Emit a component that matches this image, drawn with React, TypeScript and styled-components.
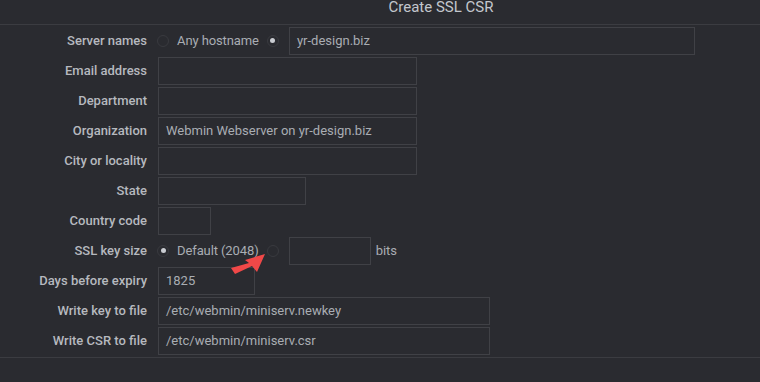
import React from 'react';
import styled, { createGlobalStyle } from 'styled-components';

const GlobalStyle = createGlobalStyle`
    html, body {
        margin: 0;
        padding: 0;
        background: #2a2b30;
    }
    body {
        font-family: Roboto, 'Liberation Sans', sans-serif;
        width: 760px;
        height: 382px;
        overflow: hidden;
    }
`;

const Page = styled.div`
    position: relative;
    width: 760px;
    height: 382px;
    background: #2a2b30;
`;

const Header = styled.div`
    height: 24px;
    border-bottom: 1px solid #3b3c41;
    padding-left: 122px;
    text-align: center;
    color: #c3c7cd;
    font-size: 15px;
    line-height: 15px;
`;

const Form = styled.div`
    display: grid;
    grid-template-columns: 147px 1fr;
    column-gap: 11px;
    row-gap: 2px;
    padding: 2px 0 2px;
    border-bottom: 1px solid #3b3c41;
`;

const Label = styled.div`
    height: 28px;
    padding-bottom: 2px;
    box-sizing: border-box;
    display: flex;
    align-items: center;
    justify-content: flex-end;
    color: #b6b9bf;
    font-size: 13px;
    font-weight: 500;
    white-space: nowrap;
`;

const Value = styled.div`
    height: 28px;
    display: flex;
    align-items: center;
`;

const Input = styled.div<{ $w: number }>`
    box-sizing: border-box;
    width: ${(p) => p.$w}px;
    height: 28px;
    border: 1px solid #404146;
    padding: 0 7px 2px;
    display: flex;
    align-items: center;
    color: #a9adb3;
    font-size: 13px;
    white-space: nowrap;
`;

const Radio = styled.span<{ $on?: boolean; $first?: boolean; $gap: number }>`
    box-sizing: border-box;
    width: 12px;
    height: 12px;
    margin: 0 ${(p) => p.$gap}px 1px ${(p) => (p.$first ? -1 : 0)}px;
    border-radius: 50%;
    border: 1px solid #393a3f;
    display: inline-flex;
    align-items: center;
    justify-content: center;
    flex-shrink: 0;
    &::after {
        content: '';
        display: ${(p) => (p.$on ? 'block' : 'none')};
        width: 5px;
        height: 5px;
        border-radius: 50%;
        background: #c9ccd1;
    }
`;

const Option = styled.span`
    color: #a9adb3;
    font-size: 13px;
    letter-spacing: -0.1px;
    margin-right: 8px;
    padding-bottom: 2px;
    white-space: nowrap;
`;

const Suffix = styled.span`
    color: #a9adb3;
    font-size: 13px;
    margin-left: 5px;
    padding-bottom: 2px;
`;

const Arrow = styled.svg`
    position: absolute;
    left: 228px;
    top: 250px;
`;

const rows: { label: string; value?: string; w: number }[] = [
    { label: 'Email address', w: 259 },
    { label: 'Department', w: 259 },
    { label: 'Organization', value: 'Webmin Webserver on yr-design.biz', w: 259 },
    { label: 'City or locality', w: 259 },
    { label: 'State', w: 148 },
    { label: 'Country code', w: 53 },
];

export default function App() {
    return (
        <Page>
            <GlobalStyle />
            <Header>Create SSL CSR</Header>
            <Form>
                <Label>Server names</Label>
                <Value>
                    <Radio $first $gap={8} />
                    <Option>Any hostname</Option>
                    <Radio $on $gap={10} />
                    <Input $w={406}>yr-design.biz</Input>
                </Value>
                {rows.map((r) => (
                    <React.Fragment key={r.label}>
                        <Label>{r.label}</Label>
                        <Value>
                            <Input $w={r.w}>{r.value}</Input>
                        </Value>
                    </React.Fragment>
                ))}
                <Label>SSL key size</Label>
                <Value>
                    <Radio $on $first $gap={8} />
                    <Option>Default (2048)</Option>
                    <Radio $gap={10} />
                    <Input $w={82} />
                    <Suffix>bits</Suffix>
                </Value>
                <Label>Days before expiry</Label>
                <Value>
                    <Input $w={97}>1825</Input>
                </Value>
                <Label>Write key to file</Label>
                <Value>
                    <Input $w={332}>/etc/webmin/miniserv.newkey</Input>
                </Value>
                <Label>Write CSR to file</Label>
                <Value>
                    <Input $w={332}>/etc/webmin/miniserv.csr</Input>
                </Value>
            </Form>
            <Arrow width="42" height="28" viewBox="0 0 42 28">
                <path d="M37 4 L17 10 L21 13 L3 18 L7 24 L24 16 L29 22 Z" fill="#f04848" />
            </Arrow>
        </Page>
    );
}
